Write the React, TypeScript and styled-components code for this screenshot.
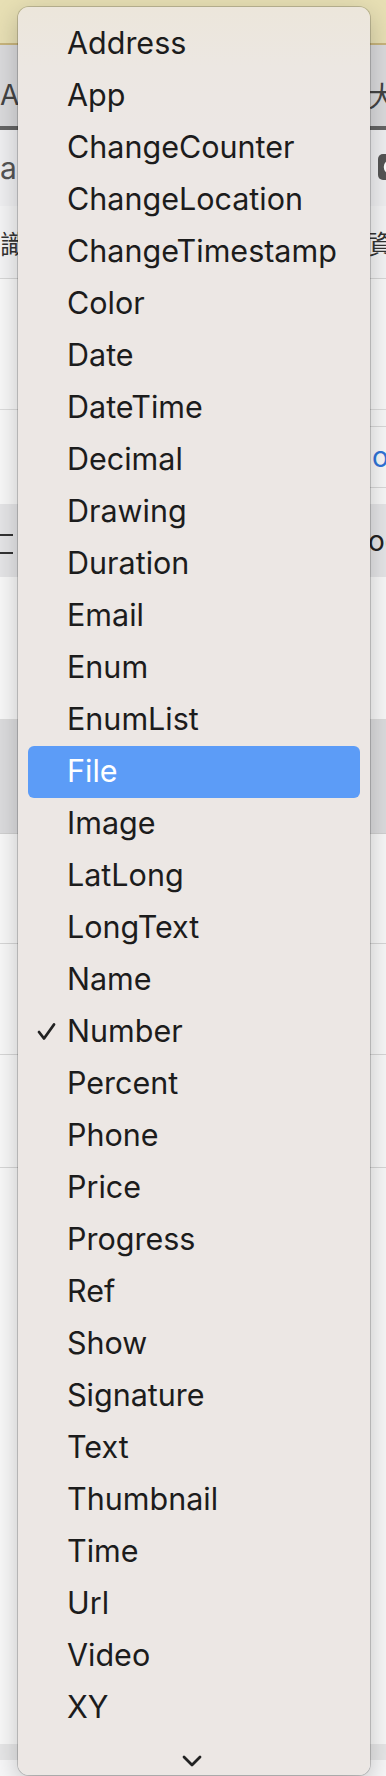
import React from 'react';
import styled, { createGlobalStyle } from 'styled-components';

const GlobalStyle = createGlobalStyle`
    html, body { margin: 0; padding: 0; background: #f7f7f8; }
    body { font-family: Inter, "Noto Sans", "Noto Sans CJK TC", sans-serif; }
`;

const TYPES = [
    'Address', 'App', 'ChangeCounter', 'ChangeLocation', 'ChangeTimestamp', 'Color', 'Date',
    'DateTime', 'Decimal', 'Drawing', 'Duration', 'Email', 'Enum', 'EnumList', 'File', 'Image',
    'LatLong', 'LongText', 'Name', 'Number', 'Percent', 'Phone', 'Price', 'Progress', 'Ref',
    'Show', 'Signature', 'Text', 'Thumbnail', 'Time', 'Url', 'Video', 'XY',
];

const Page = styled.div`
    position: relative;
    width: 386px;
    height: 1776px;
    overflow: hidden;
    background: #f7f7f8;
`;

const TopBar = styled.div`
    height: 43px;
    background: #e7dfb4;
    border-bottom: 2px solid #c7b47c;
`;

const Strip = styled.div<{ $h: number; $bg: string; $line?: string; $size?: number; $color?: string }>`
    display: flex;
    align-items: center;
    height: ${(p) => p.$h}px;
    box-sizing: border-box;
    background: ${(p) => p.$bg};
    border-bottom: ${(p) => (p.$line ? `1px solid ${p.$line}` : 'none')};
    font-size: ${(p) => p.$size ?? 24}px;
    color: ${(p) => p.$color ?? '#444'};
    white-space: nowrap;
    overflow: hidden;
`;

const TabStrip = styled(Strip)`
    padding-top: 18px;
    border-bottom: 4px solid #646464;
`;

const LeftCell = styled.div`
    flex: 0 0 368px;
    overflow: hidden;
`;

const RightCell = styled.div`
    flex: 0 0 auto;
`;

const DashStack = styled.div`
    display: flex;
    flex-direction: column;
    gap: 16px;
    padding-top: 6px;
    span { display: block; width: 13px; height: 2px; background: #333; }
`;

const BoxedCell = styled.div`
    flex: 0 0 auto;
    height: 62px;
    box-sizing: border-box;
    border-top: 1px solid #d8d8d8;
    border-bottom: 1px solid #d8d8d8;
    display: flex;
    align-items: center;
    padding-left: 4px;
    color: #2f74d8;
    font-size: 28px;
`;

const Menu = styled.div`
    position: absolute;
    top: 7px;
    left: 18px;
    width: 352px;
    height: 1768px;
    box-sizing: border-box;
    padding: 11px 10px 0;
    border-radius: 11px;
    background: linear-gradient(#ece6db 0px, #ece7e2 60px, #ece7e4 120px, #ece7e4 100%);
    box-shadow: 0 0 0 1px rgba(0, 0, 0, 0.18), 0 8px 26px rgba(0, 0, 0, 0.22);
    display: flex;
    flex-direction: column;
`;

const Item = styled.div<{ $active?: boolean }>`
    position: relative;
    height: 52px;
    flex: 0 0 52px;
    display: flex;
    align-items: center;
    padding-left: 39px;
    padding-bottom: 4px;
    box-sizing: border-box;
    border-radius: 6px;
    font-family: Inter, "Noto Sans", sans-serif;
    font-size: 30.5px;
    color: ${(p) => (p.$active ? '#ffffff' : '#1c1c1c')};
    background: ${(p) => (p.$active ? '#5c9cf7' : 'transparent')};
`;

const Check = styled.svg`
    position: absolute;
    left: 9px;
    top: 16px;
`;

const ScrollArrow = styled.div`
    flex: 1;
    display: flex;
    justify-content: center;
    padding-top: 21px;
    padding-right: 4px;
`;

const EyeIcon = () => (
    <svg width="24" height="26" viewBox="0 0 24 26">
        <rect x="0" y="0" width="24" height="26" rx="5" fill="#555" />
        <circle cx="13" cy="13" r="6" fill="none" stroke="#fff" strokeWidth="2.5" />
        <circle cx="13" cy="13" r="2" fill="#fff" />
    </svg>
);

export default function App() {
    return (
        <Page>
            <GlobalStyle />
            <TopBar />
            <TabStrip $h={85} $bg="#dadadc" $size={28}>
                <LeftCell>Apps</LeftCell>
                <RightCell>大小</RightCell>
            </TabStrip>
            <Strip $h={76} $bg="#efeff1" $size={30} $color="#555">
                <LeftCell>apps</LeftCell>
                <RightCell style={{ paddingLeft: 10, paddingTop: 2 }}><EyeIcon /></RightCell>
            </Strip>
            <Strip $h={73} $bg="#f4f4f5" $line="#d6d6d6" $size={26} $color="#333">
                <LeftCell>識別</LeftCell>
                <RightCell>資料</RightCell>
            </Strip>
            <Strip $h={131} $bg="#f8f8f8" $line="#dcdcdc" />
            <Strip $h={94} $bg="#f8f8f8">
                <LeftCell />
                <BoxedCell>o</BoxedCell>
            </Strip>
            <Strip $h={73} $bg="#e5e5e7" $size={28} $color="#222">
                <LeftCell>
                    <DashStack><span /><span /></DashStack>
                </LeftCell>
                <RightCell>og</RightCell>
            </Strip>
            <Strip $h={143} $bg="#f8f8f8" $line="#dcdcdc" />
            <Strip $h={114} $bg="#dcdcde" $line="#d0d0d0" />
            <Strip $h={110} $bg="#f8f8f8" $line="#d6d6d6" />
            <Strip $h={111} $bg="#f8f8f8" $line="#d6d6d6" />
            <Strip $h={113} $bg="#f8f8f8" $line="#d6d6d6" />
            <Strip $h={576} $bg="#f8f8f8" />
            <Strip $h={16} $bg="#e6e6e7" />

            <Menu>
                {TYPES.map((t) => (
                    <Item key={t} $active={t === 'File'}>
                        {t === 'Number' && (
                            <Check width="19" height="19" viewBox="0 0 19 19">
                                <polyline points="2,10 7,16.5 17,2.5" fill="none" stroke="#222" strokeWidth="2.8" strokeLinecap="round" strokeLinejoin="round" />
                            </Check>
                        )}
                        {t}
                    </Item>
                ))}
                <ScrollArrow>
                    <svg width="20" height="12" viewBox="0 0 20 12">
                        <polyline points="2,2 10,10 18,2" fill="none" stroke="#222" strokeWidth="2.8" strokeLinecap="round" strokeLinejoin="round" />
                    </svg>
                </ScrollArrow>
            </Menu>
        </Page>
    );
}
